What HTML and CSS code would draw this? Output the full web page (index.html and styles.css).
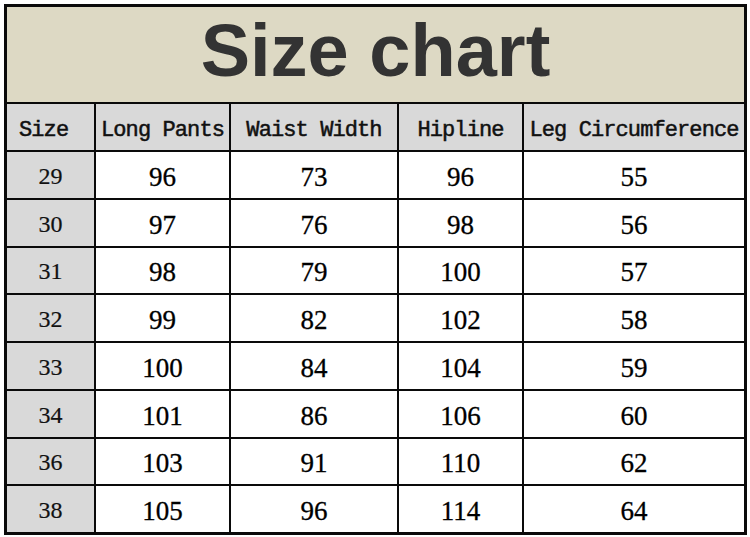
FILE: index.html
```html
<!DOCTYPE html>
<html>
<head>
<meta charset="utf-8">
<title>Size chart</title>
<link rel="stylesheet" href="styles.css">
</head>
<body>
<div class="chart">
  <div class="title">Size chart</div>
  <div class="head first">Size</div>
  <div class="head">Long Pants</div>
  <div class="head">Waist Width</div>
  <div class="head">Hipline</div>
  <div class="head">Leg Circumference</div>

  <div class="size">29</div><div class="val">96</div><div class="val">73</div><div class="val">96</div><div class="val">55</div>
  <div class="size">30</div><div class="val">97</div><div class="val">76</div><div class="val">98</div><div class="val">56</div>
  <div class="size">31</div><div class="val">98</div><div class="val">79</div><div class="val">100</div><div class="val">57</div>
  <div class="size">32</div><div class="val">99</div><div class="val">82</div><div class="val">102</div><div class="val">58</div>
  <div class="size">33</div><div class="val">100</div><div class="val">84</div><div class="val">104</div><div class="val">59</div>
  <div class="size">34</div><div class="val">101</div><div class="val">86</div><div class="val">106</div><div class="val">60</div>
  <div class="size">36</div><div class="val">103</div><div class="val">91</div><div class="val">110</div><div class="val">62</div>
  <div class="size">38</div><div class="val">105</div><div class="val">96</div><div class="val">114</div><div class="val">64</div>
</div>
</body>
</html>
```
FILE: styles.css
```css
html, body {
  margin: 0;
  padding: 0;
  background: #ffffff;
}
body {
  padding: 4px 0 0 4px;
  width: 750px;
  height: 537px;
  box-sizing: border-box;
  overflow: hidden;
}
.chart {
  box-sizing: border-box;
  width: 743px;
  height: 531px;
  background: #0a0a0a;
  padding: 3px;
  display: grid;
  grid-template-columns: 87px 133px 166px 123px 220px;
  grid-template-rows: 95px 46px repeat(8, 1fr);
  column-gap: 2px;
  row-gap: 2px;
}
.title {
  grid-column: 1 / -1;
  background: #ddd9c4;
  color: #333333;
  font-family: "Liberation Sans", Arial, sans-serif;
  font-weight: 700;
  font-size: 74px;
  line-height: 1;
  display: flex;
  align-items: center;
  justify-content: center;
  padding-bottom: 7px;
  box-sizing: border-box;
}
.head {
  background: #d9d9d9;
  color: #111111;
  font-family: "Liberation Mono", "Courier New", monospace;
  font-size: 22px;
  letter-spacing: -0.9px;
  font-weight: 400;
  -webkit-text-stroke: 0.5px #111111;
  display: flex;
  align-items: center;
  justify-content: center;
  white-space: nowrap;
  padding-top: 6px;
  box-sizing: border-box;
}
.head.first {
  justify-content: flex-start;
  padding-left: 12px;
}
.size {
  background: #d9d9d9;
  color: #111111;
  font-family: "Liberation Serif", "Times New Roman", serif;
  font-size: 24px;
  -webkit-text-stroke: 0.2px #111111;
  display: flex;
  align-items: center;
  justify-content: center;
  padding-top: 3px;
  box-sizing: border-box;
}
.val {
  background: #ffffff;
  color: #000000;
  font-family: "Liberation Serif", "Times New Roman", serif;
  font-size: 27px;
  -webkit-text-stroke: 0.3px #000000;
  display: flex;
  align-items: center;
  justify-content: center;
  padding-top: 5px;
  box-sizing: border-box;
}
```
